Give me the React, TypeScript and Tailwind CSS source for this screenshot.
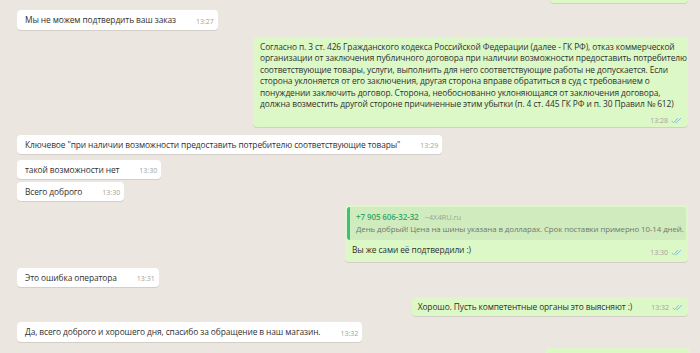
import React from "react";

// Double tick shown next to outgoing message time
function Ticks() {
  return (
    <svg width="11" height="7" viewBox="0 0 16 10" className="inline-block ml-[3px]">
      <path d="M1 5.5l2.8 2.8L10 1.5" fill="none" stroke="#74b9e8" strokeWidth="1.3" />
      <path d="M6.5 8.2L7.5 8.3 14.5 1.5" fill="none" stroke="#74b9e8" strokeWidth="1.3" />
    </svg>
  );
}

function Time({ t, read }: { t: string; read?: boolean }) {
  return (
    <span className="text-[7px] tracking-normal text-[#a2a2a2] whitespace-nowrap leading-none flex items-center">
      {t}
      {read && <Ticks />}
    </span>
  );
}

function In({ text, t, className = "", tall }: { text: string; t: string; className?: string; tall?: boolean }) {
  return (
    <div className={`flex justify-start pl-[17px] ${className}`}>
      <div className="bg-white rounded-[4px] shadow-[0_1px_0.5px_rgba(0,0,0,0.1)] pl-[8px] pr-[4px] py-[4px] flex items-end gap-[20px]">
        <span className={tall ? "leading-[12px]" : "leading-[11px]"}>{text}</span>
        <span className="pb-[1px]">
          <Time t={t} />
        </span>
      </div>
    </div>
  );
}

function Out({ children, className = "" }: { children: React.ReactNode; className?: string }) {
  return (
    <div className={`flex justify-end pr-[12px] ${className}`}>
      <div className="bg-[#dcf8c6] rounded-[4px] shadow-[0_1px_0.5px_rgba(0,0,0,0.1)]">{children}</div>
    </div>
  );
}

const lawLines = [
  "Согласно п. 3 ст. 426 Гражданского кодекса Российской Федерации (далее - ГК РФ), отказ коммерческой",
  "организации от заключения публичного договора при наличии возможности предоставить потребителю",
  "соответствующие товары, услуги, выполнить для него соответствующие работы не допускается. Если",
  "сторона уклоняется от его заключения, другая сторона вправе обратиться в суд с требованием о",
  "понуждении заключить договор. Сторона, необоснованно уклоняющаяся от заключения договора,",
  "должна возместить другой стороне причиненные этим убытки (п. 4 ст. 445 ГК РФ и п. 30 Правил № 612)",
];

export default function App() {
  return (
    <div
      className="w-[700px] h-[353px] overflow-hidden bg-[#ebe6df] text-[8.4px] tracking-[-0.1px] text-[#303030]"
      style={{ fontFamily: '"Open Sans", "Noto Sans", sans-serif' }}
    >
      <div className="flex justify-end pr-[12px] -mt-[20px]">
        <div className="bg-[#dcf8c6] w-[138px] h-[23px] rounded-[4px] shadow-[0_1px_0.5px_rgba(0,0,0,0.1)]" />
      </div>

      <In className="mt-[7px]" tall text="Мы не можем подтвердить ваш заказ" t="13:27" />

      <Out className="mt-[7px]">
        <div className="w-[435px] pl-[7px] pr-[4px] pt-[4px] pb-[3px]">
          <div className="leading-[11.4px]">
            {lawLines.map((line) => (
              <div key={line} className="whitespace-nowrap">
                {line}
              </div>
            ))}
          </div>
          <div className="flex justify-end mt-[8px] pr-[2px]">
            <Time t="13:28" read />
          </div>
        </div>
      </Out>

      <In
        className="mt-[8px]"
        text={"Ключевое \"при наличии возможности предоставить потребителю соответствующие товары\""}
        t="13:29"
      />
      <In className="mt-[6px]" text="такой возможности нет" t="13:30" />
      <In className="mt-[3px]" text="Всего доброго" t="13:30" />

      <Out className="mt-[4px]">
        <div className="w-[343px] p-[2px]">
          <div className="bg-[#d0ebbd] rounded-[3px] border-l-[3px] border-[#3fc07a] pl-[6px] pr-[4px] pt-[4px] pb-[5px]">
            <div className="flex items-center gap-[6px] leading-[12px]">
              <span className="text-[#35a86b] font-semibold text-[8px]">+7 905 606-32-32</span>
              <span className="text-[#9aa59a] text-[7.6px]">~4X4RU.ru</span>
            </div>
            <div className="text-[#707a6e] text-[7.9px] leading-[12px] whitespace-nowrap">
              День добрый! Цена на шины указана в долларах. Срок поставки примерно 10-14 дней.
            </div>
          </div>
          <div className="flex items-end justify-between pl-[5px] pr-[4px] pt-[4px] pb-[4px]">
            <span className="leading-[12px]">Вы же сами её подтвердили :)</span>
            <Time t="13:30" read />
          </div>
        </div>
      </Out>

      <In className="mt-[6px]" text="Это ошибка оператора" t="13:31" />

      <Out className="mt-[10px]">
        <div className="flex items-end gap-[19px] pl-[6px] pr-[5px] py-[4px]">
          <span className="leading-[11px]">Хорошо. Пусть компетентные органы это выясняют :)</span>
          <span className="pb-[1px]">
            <Time t="13:32" read />
          </span>
        </div>
      </Out>

      <In
        className="mt-[6px]"
        tall
        text="Да, всего доброго и хорошего дня, спасибо за обращение в наш магазин."
        t="13:32"
      />

      <div className="flex justify-end pr-[10px] mt-[6px]">
        <div className="bg-[#dcf8c6] w-[145px] h-[20px] rounded-[4px]" />
      </div>
    </div>
  );
}
